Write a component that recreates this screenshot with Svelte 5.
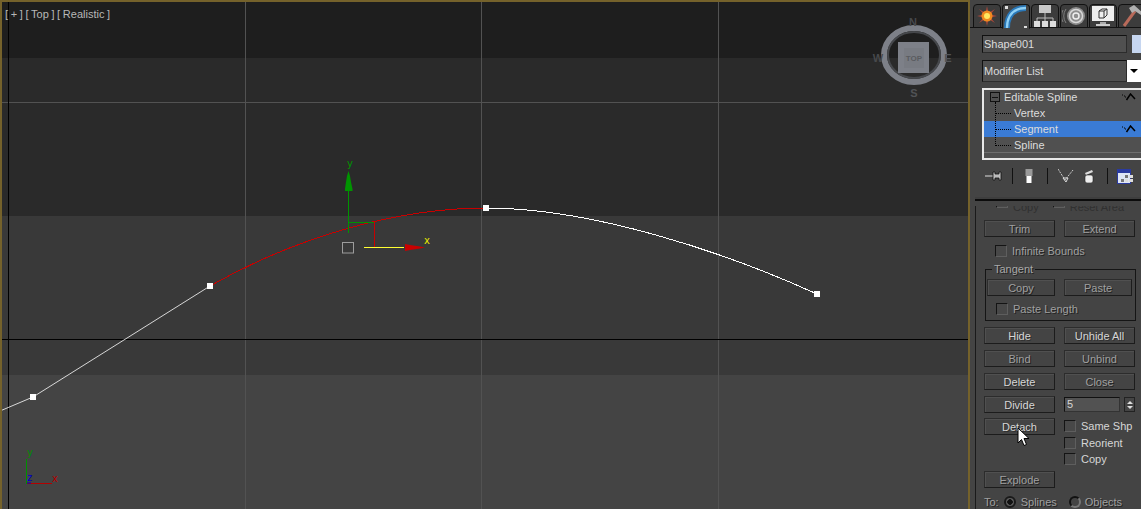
<script>
  const grid = [245, 481, 718];
</script>

<div class="app">
  <div class="viewport">
    <svg class="scene" width="966" height="507" viewBox="2 2 966 507">
      <rect x="2" y="2" width="966" height="56" fill="#1e1e1e" />
      <rect x="2" y="58" width="966" height="158" fill="#2a2a2a" />
      <rect x="2" y="216" width="966" height="159" fill="#393939" />
      <rect x="2" y="375" width="966" height="134" fill="#444444" />

      {#each grid as x}
        <line x1={x + 0.5} y1="2" x2={x + 0.5} y2="509" stroke="#525252" />
      {/each}
      <line x1="2" y1="102.5" x2="968" y2="102.5" stroke="#525252" />
      <line x1="2" y1="339.5" x2="968" y2="339.5" stroke="#000" />
      <line x1="8.5" y1="2" x2="8.5" y2="509" stroke="#000" />

      <!-- spline -->
      <path class="thin" d="M0 411 L33 397 L210 286" stroke="#fff" />
      <path class="jag" d="M486 208 C590 208 720 250 817 294" stroke="#fff" />
      <path class="jag" d="M210 286 C300 235 400 208 486 208" stroke="#c80000" />
      <rect x="30" y="394" width="6" height="6" fill="#fff" />
      <rect x="207" y="283" width="6" height="6" fill="#fff" />
      <rect x="483" y="205" width="6" height="6" fill="#fff" />
      <rect x="814" y="291" width="6" height="6" fill="#fff" />

      <!-- move gizmo -->
      <line x1="348.5" y1="180" x2="348.5" y2="233" stroke="#009400" />
      <path d="M348.5 171 L350 176 L351 182 L352.5 189 L352.5 191 L345 191 L345 189 L346 182 L347 176 Z" fill="#009400" />
      <line x1="348" y1="222.5" x2="374" y2="222.5" stroke="#009400" />
      <line x1="374.5" y1="222" x2="374.5" y2="247" stroke="#c80000" />
      <line x1="364" y1="247.5" x2="404" y2="247.5" stroke="#ffff32" />
      <path d="M405 244 L410 245 L420 246.5 L425 247.5 L420 248.5 L410 250 L405 251 Z" fill="#c80000" />
      <rect x="342.5" y="242.5" width="11" height="10.5" fill="none" stroke="#9c9c9c" />
      <text x="347" y="167" class="axis" fill="#009400">y</text>
      <text x="424" y="244" class="axis" fill="#e6e600">x</text>

      <!-- view cube -->
      <ellipse cx="914" cy="55" rx="30" ry="27" fill="none" stroke="#7d8088" stroke-width="6" />
      <ellipse cx="914" cy="55" rx="26" ry="23" fill="none" stroke="#46484c" stroke-width="2" />
      <rect x="898" y="42" width="31" height="31" fill="#7d8088" />
      <rect x="904" y="48" width="20" height="20" fill="#787b82" />
      <text x="914" y="61" class="cube" fill="#5a5c60">TOP</text>
      <text x="913" y="26" class="compass" fill="#47494c">N</text>
      <text x="878" y="62" class="compass" fill="#47494c">W</text>
      <text x="948" y="62" class="compass" fill="#515356">E</text>
      <text x="914" y="97" class="compass" fill="#515356">S</text>

      <!-- world triad -->
      <line x1="26.5" y1="459" x2="26.5" y2="484" stroke="#009000" />
      <line x1="27" y1="483.5" x2="52" y2="483.5" stroke="#b40000" />
      <line x1="27" y1="483" x2="31" y2="483" stroke="#0000c8" />
      <text x="27" y="456" class="axis" fill="#008c00">y</text>
      <text x="27" y="481" class="axis" fill="#0000c8">z</text>
      <text x="52" y="482" class="axis" fill="#b40000">x</text>
    </svg>
    <div class="labels">[ + ] [ Top ] [ Realistic ]</div>
  </div>

  <div class="panel">
    <div class="tabs">
      <div class="tab">
        <svg width="22" height="22" viewBox="0 0 22 22">
          <path d="M11 1 L12.5 8 L19 4 L14.5 9.5 L21 11 L14.5 12.5 L19 18 L12.5 14 L11 21 L9.5 14 L3 18 L7.5 12.5 L1 11 L7.5 9.5 L3 4 L9.5 8 Z" fill="#a8483a" />
          <circle cx="11" cy="11" r="5.5" fill="#f08a20" />
          <circle cx="11" cy="11" r="3" fill="#ffe860" />
        </svg>
      </div>
      <div class="tab active">
        <svg width="24" height="24" viewBox="0 0 24 24">
          <path d="M3 23 C3 10 10 3 22 3" fill="none" stroke="#2a78b8" stroke-width="6" />
          <path d="M3 23 C3 10 10 3 22 3" fill="none" stroke="#8fd0f5" stroke-width="2.4" />
          <rect x="1" y="1" width="3" height="3" fill="#ddd" />
          <rect x="20" y="21" width="3" height="3" fill="#ddd" />
        </svg>
      </div>
      <div class="tab">
        <svg width="22" height="22" viewBox="0 0 22 22">
          <rect x="5" y="0" width="12" height="8" fill="#c8c8c8" />
          <path d="M11 8 V13 M3 16 V13 H19 V16 M11 13 V16" fill="none" stroke="#bbb" />
          <rect x="0" y="16" width="6" height="6" fill="#ddd" />
          <rect x="8" y="16" width="6" height="6" fill="#ddd" />
          <rect x="16" y="16" width="6" height="6" fill="#ddd" />
        </svg>
      </div>
      <div class="tab">
        <svg width="24" height="22" viewBox="0 0 24 22">
          <path d="M1 5 A13 13 0 0 0 1 17 M4 4 A12 12 0 0 0 4 18" fill="none" stroke="#808080" />
          <circle cx="14" cy="11" r="9" fill="#8e8e8e" />
          <circle cx="14" cy="11" r="6.5" fill="none" stroke="#d8d8d8" stroke-width="1.5" />
          <circle cx="14" cy="11" r="3" fill="none" stroke="#eee" stroke-width="1.5" />
        </svg>
      </div>
      <div class="tab">
        <svg width="24" height="22" viewBox="0 0 24 22">
          <rect x="1" y="1" width="22" height="15" fill="#eee" />
          <path d="M8 6 L11 4 H16 V10 L13 13 H8 Z M8 6 H13 V13 M13 6 L16 4" fill="none" stroke="#333" />
          <rect x="9" y="17" width="6" height="2" fill="#aaa" />
          <rect x="5" y="19" width="14" height="2" fill="#ccc" />
        </svg>
      </div>
      <div class="tab">
        <svg width="22" height="24" viewBox="0 0 22 24">
          <line x1="3" y1="22" x2="14" y2="7" stroke="#b86a5a" stroke-width="3" />
          <path d="M8 4 L13 1 L22 9 L20 11 L14 7 L11 9 Z" fill="#b0b0b0" />
        </svg>
      </div>
    </div>

    <div class="name-row">
      <div class="field name">Shape001</div>
      <div class="swatch"></div>
    </div>

    <div class="modifier-row">
      <div class="field modifier">Modifier List</div>
      <div class="dropdown"><span class="caret"></span></div>
    </div>

    <div class="stack">
      <div class="tree"></div>
      <div class="stack-row root">
        <span class="minus"></span>
        <span>Editable Spline</span>
        <svg class="lit" width="14" height="8" viewBox="0 0 14 8"><path d="M0 2h1M2 3h1M3 4h1" stroke="#000" /><path d="M4.5 7 L8.5 1 L13 6" fill="none" stroke="#000" stroke-width="1.5" /></svg>
      </div>
      <div class="stack-row sub"><span class="dots"></span>Vertex</div>
      <div class="stack-row sub selected">
        <span class="dots"></span>Segment
        <svg class="lit" width="14" height="8" viewBox="0 0 14 8"><path d="M0 2h1M2 3h1M3 4h1" stroke="#000" /><path d="M4.5 7 L8.5 1 L13 6" fill="none" stroke="#000" stroke-width="1.5" /></svg>
      </div>
      <div class="stack-row sub"><span class="dots"></span>Spline</div>
      <div class="stack-foot"></div>
    </div>

    <div class="toolbar">
      <svg class="tool pin" width="18" height="12" viewBox="0 0 18 12">
        <path d="M0 6 H8" stroke="#ddd" />
        <path d="M8 2 H10 V4 H14 V2 H16 V10 H14 V8 H10 V10 H8 Z" fill="#bbb" stroke="#111" stroke-width="0.8" />
      </svg>
      <span class="sep s1"></span>
      <svg class="tool t2" width="8" height="14" viewBox="0 0 8 14">
        <rect x="0.5" y="0" width="7" height="7" fill="#9a9a9a" />
        <rect x="1.5" y="7" width="5" height="7" fill="#fff" />
      </svg>
      <span class="sep s2"></span>
      <svg class="tool t3" width="16" height="14" viewBox="0 0 16 14">
        <path d="M0 0 L7 11 L15 1" fill="none" stroke="#ccc" stroke-dasharray="2 1" />
        <path d="M5 9 H10 L8 13 Z" fill="none" stroke="#ddd" />
      </svg>
      <svg class="tool t4" width="10" height="14" viewBox="0 0 10 14">
        <path d="M1 4 L8 1 L9 3 L2 6 Z" fill="#ddd" />
        <rect x="1" y="6" width="8" height="8" rx="2" fill="#eee" stroke="#222" stroke-width="0.6" />
      </svg>
      <span class="sep s3"></span>
      <svg class="tool t5" width="16" height="15" viewBox="0 0 16 15">
        <rect x="0.5" y="0.5" width="13" height="14" fill="#dfe6f5" stroke="#2a3aa0" />
        <rect x="1" y="1" width="12" height="3" fill="#2a3aa0" />
        <rect x="8" y="6" width="3" height="3" fill="#777" />
        <rect x="12" y="6" width="4" height="3" fill="#ddd" />
        <rect x="4" y="10" width="3" height="3" fill="#777" />
        <rect x="8" y="10" width="3" height="3" fill="#ddd" />
        <rect x="12" y="10" width="4" height="3" fill="#ddd" />
      </svg>
    </div>

    <div class="divider"></div>

    <div class="rollout">
      <div class="clipped">
        <span class="check"></span><span class="dim">Copy</span>
        <span class="check second"></span><span class="dim">Reset Area</span>
      </div>

      <div class="pair">
        <div class="btn dim">Trim</div>
        <div class="btn dim">Extend</div>
      </div>
      <label class="opt infinite"><span class="check"></span><span class="dim">Infinite Bounds</span></label>

      <fieldset class="tangent">
        <legend>Tangent</legend>
        <div class="pair narrow">
          <div class="btn dim">Copy</div>
          <div class="btn dim">Paste</div>
        </div>
        <label class="opt paste"><span class="check"></span><span class="dim">Paste Length</span></label>
      </fieldset>

      <div class="pair hide"><div class="btn">Hide</div><div class="btn">Unhide All</div></div>
      <div class="pair"><div class="btn dim">Bind</div><div class="btn dim">Unbind</div></div>
      <div class="pair"><div class="btn">Delete</div><div class="btn dim">Close</div></div>
      <div class="pair">
        <div class="btn">Divide</div>
        <div class="spin-wrap">
          <div class="spin">5</div>
          <div class="spinner"><span class="up"></span><span class="down"></span></div>
        </div>
      </div>

      <div class="detach">
        <div class="btn">Detach</div>
        <div class="detach-opts">
          <label class="opt"><span class="check"></span>Same Shp</label>
          <label class="opt"><span class="check"></span>Reorient</label>
          <label class="opt"><span class="check"></span>Copy</label>
        </div>
      </div>

      <div class="btn dim explode">Explode</div>

      <div class="to">
        <span class="dim">To:</span>
        <span class="radio on"></span><span class="dim">Splines</span>
        <span class="radio off"></span><span class="dim">Objects</span>
      </div>
    </div>
  </div>

  <svg class="cursor" width="14" height="20" viewBox="0 0 14 20">
    <path d="M1 1 V16 L4.5 12.5 L7 18.5 L9.5 17.5 L7 11.5 L12 11.5 Z" fill="#fff" stroke="#000" />
  </svg>
</div>

<style>
  :global(body) {
    margin: 0;
    background: #444;
  }
  .app {
    position: relative;
    display: flex;
    width: 1141px;
    height: 509px;
    overflow: hidden;
    font-family: "Liberation Sans", sans-serif;
    font-size: 11px;
    color: #d6d6d6;
    background: #444;
  }
  .viewport {
    position: relative;
    flex: none;
    width: 966px;
    height: 507px;
    border: 2px solid #75622b;
    border-bottom: 0;
  }
  .scene {
    display: block;
  }
  .jag {
    fill: none;
    shape-rendering: crispEdges;
  }
  .thin {
    fill: none;
    stroke-width: 0.8;
  }
  .labels {
    position: absolute;
    left: 3px;
    top: 6px;
    font-family: "Liberation Sans", sans-serif;
    font-size: 11px;
    color: #b8b8b8;
    white-space: pre;
    word-spacing: -0.4px;
  }
  .axis {
    font-family: "DejaVu Sans", sans-serif;
    font-size: 10px;
  }
  .cube {
    font-family: "Liberation Sans", sans-serif;
    font-size: 8px;
    font-weight: 700;
    text-anchor: middle;
  }
  .compass {
    font-family: "Liberation Sans", sans-serif;
    font-size: 11px;
    font-weight: 700;
    text-anchor: middle;
  }

  .panel {
    flex: none;
    width: 171px;
    display: flex;
    flex-direction: column;
    padding-top: 4px;
  }
  .tabs {
    display: flex;
    gap: 1px;
    height: 24px;
    padding-left: 3px;
    width: 200px;
    box-shadow: inset 0 -1px 0 #111;
  }
  .tab {
    flex: none;
    width: 28px;
    height: 24px;
    box-sizing: border-box;
    display: flex;
    align-items: center;
    justify-content: center;
    background: #3c3c3c;
    border: 1px solid #111;
    border-radius: 4px 4px 0 0;
    overflow: hidden;
  }
  .tab svg {
    flex: none;
  }
  .tab.active {
    background: #444;
    border-bottom-color: #444;
    height: 25px;
  }

  .name-row {
    display: flex;
    margin: 7px 0 0 12px;
    height: 18px;
    gap: 5px;
  }
  .field {
    box-sizing: border-box;
    flex: none;
    background: #505050;
    border: 1px solid #2c2c2c;
    border-top-color: #111;
    border-left-color: #111;
    color: #dcdcdc;
    padding: 0 1px;
    display: flex;
    align-items: center;
  }
  .name {
    width: 145px;
  }
  .swatch {
    width: 20px;
    flex: none;
    background: #c6d6f0;
  }
  .modifier-row {
    display: flex;
    margin: 7px 0 0 12px;
    height: 22px;
  }
  .modifier {
    width: 145px;
  }
  .dropdown {
    width: 14px;
    flex: none;
    background: #fff;
    display: flex;
    align-items: center;
    justify-content: center;
  }
  .caret {
    width: 0;
    height: 0;
    border: 4px solid transparent;
    border-top-color: #000;
    border-bottom: 0;
  }

  .stack {
    position: relative;
    flex: none;
    box-sizing: border-box;
    margin: 6px 0 0 12px;
    width: 165px;
    height: 72px;
    border: 1px solid #e8e8e8;
    outline: 1px solid #e8e8e8;
    outline-offset: -2px;
    padding: 0 1px;
    background: #505050;
    color: #dcdcdc;
  }
  .stack-row {
    position: relative;
    height: 16px;
    display: flex;
    align-items: center;
  }
  .stack-row.root {
    padding-left: 20px;
  }
  .stack-row.sub {
    padding-left: 30px;
  }
  .selected {
    background: #3a7bd5;
  }
  .minus {
    position: absolute;
    left: 6px;
    top: 3px;
    width: 8px;
    height: 8px;
    border: 1px solid #111;
    background:
      linear-gradient(#111, #111) center / 6px 1px no-repeat;
  }
  .dots {
    position: absolute;
    left: 11px;
    top: 8px;
    width: 16px;
    border-top: 1px dotted #000;
  }
  .tree {
    position: absolute;
    left: 12px;
    top: 13px;
    height: 42px;
    border-left: 1px dotted #000;
    z-index: 1;
  }
  .lit {
    position: absolute;
    left: 138px;
    top: 4px;
  }
  .stack-foot {
    height: 6px;
    border-top: 1px solid #6e6e6e;
    margin-top: -1px;
    box-sizing: border-box;
  }

  .toolbar {
    display: flex;
    align-items: center;
    height: 22px;
    margin: 5px 0 0 15px;
  }
  .tool {
    flex: none;
  }
  .sep {
    flex: none;
    width: 1px;
    height: 16px;
    background: #111;
  }
  .s1 { margin-left: 9px; }
  .t2 { margin-left: 12px; }
  .s2 { margin-left: 14px; }
  .t3 { margin-left: 10px; }
  .t4 { margin-left: 10px; }
  .s3 { margin-left: 13px; }
  .t5 { margin-left: 9px; }

  .divider {
    margin: 12px 0 0 5px;
    height: 2px;
    background: #0c0c0c;
    box-shadow: 0 -2px 0 #3e3e3e;
  }

  .rollout {
    flex: 1;
    position: relative;
    margin: 5px 0 0 5px;
    padding: 0 0 0 8px;
    border-left: 1px solid #1a1a1a;
    display: flex;
    flex-direction: column;
  }
  .clipped {
    height: 8px;
    overflow: hidden;
    display: flex;
    gap: 5px;
    align-items: flex-end;
    padding-left: 12px;
    line-height: 10px;
  }
  .clipped .check {
    height: 12px;
    margin-bottom: 6px;
    flex: none;
  }
  .clipped .dim {
    margin-bottom: 2px;
    color: #303030;
    text-shadow: none;
  }
  .clipped .second {
    margin-left: 9px;
  }

  .pair {
    display: flex;
    flex: none;
    gap: 9px;
    margin-top: 6px;
    height: 17px;
  }
  .pair .btn {
    width: 71px;
  }
  .btn {
    box-sizing: border-box;
    flex: none;
    height: 17px;
    width: 71px;
    border: 1px solid #1c1c1c;
    border-top-color: #2c2c2c;
    border-left-color: #2c2c2c;
    background: #444;
    box-shadow: inset 1px 1px 0 #505050;
    display: flex;
    align-items: center;
    justify-content: center;
    color: #d6d6d6;
    text-shadow: 1px 1px 0 #2e2e2e;
  }
  .dim {
    color: #a0a0a0;
    text-shadow: 1px 1px 0 #222;
  }
  .opt {
    display: flex;
    flex: none;
    align-items: center;
    gap: 5px;
    height: 14px;
  }
  .check {
    display: block;
    box-sizing: border-box;
    flex: none;
    width: 12px;
    height: 12px;
    background: #484848;
    border: 1px solid #5e5e5e;
    border-top-color: #141414;
    border-left-color: #141414;
  }
  .infinite {
    margin: 7px 0 0 11px;
  }
  .tangent {
    box-sizing: border-box;
    flex: none;
    position: relative;
    margin: 5px 0 0 1px;
    padding: 0 0 0 1px;
    width: 151px;
    height: 58px;
    min-width: 0;
    border: 1px solid #151515;
  }
  .tangent legend {
    padding: 0 2px;
    margin-left: 5px;
    color: #a8a8a8;
    line-height: 12px;
    text-shadow: 1px 1px 0 #222;
  }
  .pair.narrow {
    margin-top: 4px;
  }
  .pair.narrow .btn {
    width: 68px;
  }
  .paste {
    margin: 6px 0 0 9px;
  }
  .spin-wrap {
    display: flex;
    align-items: flex-start;
    gap: 4px;
    padding-top: 1px;
  }
  .spin {
    box-sizing: border-box;
    width: 56px;
    height: 15px;
    background: #525252;
    border: 1px solid #333;
    border-top-color: #111;
    border-left-color: #111;
    padding-left: 2px;
    line-height: 13px;
  }
  .spinner {
    box-sizing: border-box;
    width: 11px;
    height: 15px;
    border: 1px solid #222;
    display: flex;
    flex-direction: column;
    align-items: center;
    justify-content: center;
    gap: 2px;
  }
  .up, .down {
    width: 0;
    height: 0;
    border: 3px solid transparent;
  }
  .up {
    border-bottom-color: #ddd;
    border-top: 0;
  }
  .down {
    border-top-color: #ddd;
    border-bottom: 0;
  }
  .detach {
    display: flex;
    flex: none;
    gap: 9px;
    margin-top: 5px;
  }
  .detach-opts {
    display: flex;
    flex-direction: column;
    gap: 2.5px;
    margin-top: 1px;
  }
  .explode {
    margin-top: 5px;
  }
  .to {
    display: flex;
    flex: none;
    align-items: center;
    margin-top: 7px;
    height: 14px;
  }
  .radio {
    box-sizing: border-box;
    flex: none;
    width: 12px;
    height: 12px;
    border-radius: 50%;
    border: 2px solid #1a1a1a;
    margin-left: 5px;
    margin-right: 5px;
  }
  .radio.on {
    background: radial-gradient(circle, #111 0 2.5px, #5c5c5c 3px);
  }
  .radio.off {
    margin-left: 12px;
    margin-right: 4px;
    border-color: #111;
    border-right-color: #777;
    border-bottom-color: #777;
  }
  .cursor {
    position: absolute;
    left: 1017px;
    top: 427px;
  }
</style>
